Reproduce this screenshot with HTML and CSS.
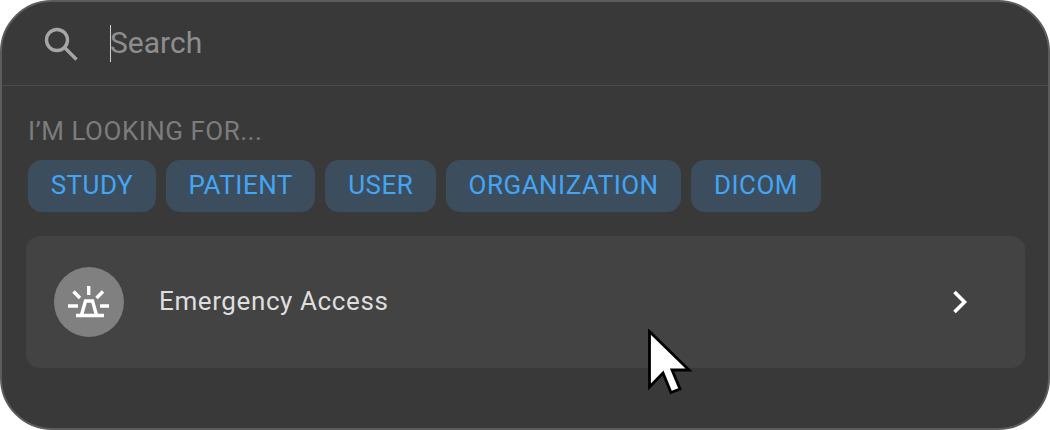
FILE: index.html
```html
<!DOCTYPE html>
<html lang="en">
<head>
	<meta charset="UTF-8">
	<title>Search</title>
	<link rel="stylesheet" href="styles.css">
</head>
<body>
	<div class="panel">
		<div class="search-bar">
			<svg class="search-icon" width="36" height="36" viewBox="0 0 36 36">
				<circle cx="14" cy="14" r="10.5" fill="none" stroke="#a6a6a6" stroke-width="3.4"/>
				<path d="M21.5 21.5L33.5 33.5" fill="none" stroke="#a6a6a6" stroke-width="3.4"/>
			</svg>
			<span class="caret"></span>
			<span class="placeholder">Search</span>
		</div>
		<div class="looking">
			<div class="looking-title">I’M LOOKING FOR...</div>
			<ul class="chips">
				<li>STUDY</li>
				<li>PATIENT</li>
				<li>USER</li>
				<li>ORGANIZATION</li>
				<li>DICOM</li>
			</ul>
		</div>
		<div class="card">
			<div class="card-icon">
				<svg width="44" height="44" viewBox="0 0 44 44">
					<path d="M21.700 6V15M6.500 11.500L13 18M36 11.500L29.500 18M1 26H11M33 26H42M9 35.500H37" fill="none" stroke="#fff" stroke-width="3.400"/>
					<path d="M14.500 35L18.500 21H25.500L29.500 35" fill="none" stroke="#fff" stroke-width="3.400"/>
				</svg>
			</div>
			<div class="card-text">Emergency Access</div>
			<svg class="chevron" width="18" height="26" viewBox="0 0 18 26">
				<path d="M1.500 3L11.500 13L1.500 23" fill="none" stroke="#fff" stroke-width="3.600"/>
			</svg>
		</div>
		<svg class="pointer" width="46" height="66" viewBox="0 0 46 66">
			<path d="M2.500 2.500V58L16 44L24 63.500L33 60L25 41H42Z" fill="#fff" stroke="#000" stroke-width="2.800"/>
		</svg>
	</div>
</body>
</html>
```

FILE: styles.css
```css
*{
	margin: 0;
	padding: 0;
	box-sizing: border-box;
}
ul li{
	list-style-type: none;
}
body{
	background: #fff;
	font-family: Roboto, "Liberation Sans", sans-serif;
}
.panel{
	position: relative;
	width: 1050px;
	height: 430px;
	overflow: hidden;
	border: 2px solid #5c5c5c;
	border-radius: 52px;
	background: #393939;
}
.search-bar{
	display: flex;
	align-items: center;
	height: 84px;
	padding-left: 41px;
	border-bottom: 1px solid #4c4c4c;
}
.caret{
	margin-left: 31px;
	width: 1px;
	height: 37px;
	background: #d0d0d0;
}
.placeholder{
	margin-top: -3px;
	margin-left: -1px;
	font-size: 30px;
	color: #8e8e8e;
}
.looking{
	padding: 30px 0 0 26px;
}
.looking-title{
	font-size: 26px;
	line-height: 30px;
	letter-spacing: 0.5px;
	color: #7c7c7c;
}
.chips{
	display: flex;
	gap: 10px;
	margin-top: 14px;
}
.chips li{
	padding: 0 22.7px;
	height: 52px;
	line-height: 51px;
	font-size: 26px;
	letter-spacing: 0.48px;
	color: #42a5f5;
	background: #3c4e5e;
	border-radius: 14px;
}
.card{
	display: flex;
	align-items: center;
	margin: 24px 23px 0 24px;
	padding: 0 54px 0 28px;
	height: 132px;
	background: #434343;
	border-radius: 14px;
}
.card-icon{
	display: flex;
	align-items: center;
	justify-content: center;
	width: 70px;
	height: 70px;
	border-radius: 50%;
	background: #808080;
}
.card-text{
	flex: 1;
	margin-left: 35px;
	margin-top: -2px;
	font-size: 26px;
	letter-spacing: 0.6px;
	color: #dedede;
}
.pointer{
	position: absolute;
	left: 645px;
	top: 327px;
}
```
